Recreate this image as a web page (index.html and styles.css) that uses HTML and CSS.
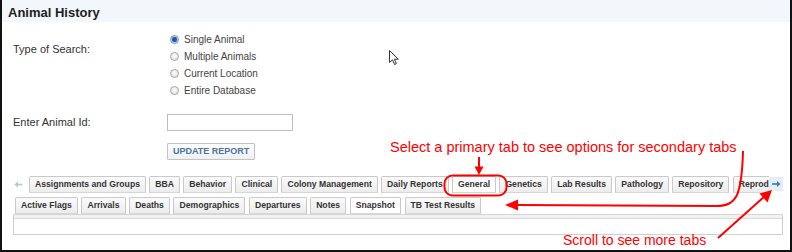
FILE: index.html
```html
<!DOCTYPE html>
<html>
<head>
<meta charset="utf-8">
<link rel="stylesheet" href="styles.css">
</head>
<body>
<div class="frame">
  <div class="header">Animal History</div>
  <div class="form">
    <div class="row search">
      <div class="label">Type of Search:</div>
      <div class="radios">
        <div class="radio"><span class="dot on"></span>Single Animal</div>
        <div class="radio"><span class="dot"></span>Multiple Animals</div>
        <div class="radio"><span class="dot"></span>Current Location</div>
        <div class="radio"><span class="dot"></span>Entire Database</div>
      </div>
    </div>
    <div class="row idrow">
      <div class="label">Enter Animal Id:</div>
      <input class="idinput" type="text">
    </div>
    <div class="row btnrow">
      <div class="label"></div>
      <button class="btn">UPDATE REPORT</button>
    </div>
  </div>
  <div class="tabs">
    <div class="strip primary">
      <div class="scroll left">
        <svg width="14" height="17" viewBox="0 0 14 17"><path d="M3.5 8.5H9.5" stroke="#b9c4cf" stroke-width="1.6"/><path d="M1.5 8.5L5 5.5V11.5Z" fill="#b9c4cf"/></svg>
      </div>
      <div class="tablist">
        <div class="tab">Assignments and Groups</div>
        <div class="tab">BBA</div>
        <div class="tab">Behavior</div>
        <div class="tab">Clinical</div>
        <div class="tab">Colony Management</div>
        <div class="tab">Daily Reports</div>
        <div class="tab active">General</div>
        <div class="tab">Genetics</div>
        <div class="tab">Lab Results</div>
        <div class="tab">Pathology</div>
        <div class="tab">Repository</div>
        <div class="tab">Reproductive</div>
      </div>
      <div class="scroll right">
        <svg width="14" height="14" viewBox="0 0 14 14"><path d="M3 7H9" stroke="#3b78c0" stroke-width="1.6"/><path d="M11.5 7L8 4V10Z" fill="#3b78c0"/></svg>
      </div>
    </div>
    <div class="strip secondary">
      <div class="tab">Active Flags</div>
      <div class="tab">Arrivals</div>
      <div class="tab">Deaths</div>
      <div class="tab">Demographics</div>
      <div class="tab">Departures</div>
      <div class="tab">Notes</div>
      <div class="tab active">Snapshot</div>
      <div class="tab">TB Test Results</div>
    </div>
    <div class="panel"></div>
  </div>

  <div class="note note1">Select a primary tab to see options for secondary tabs</div>
  <div class="note note2">Scroll to see more tabs</div>

  <svg class="overlay" width="792" height="252" viewBox="0 0 792 252">
    <rect x="444.5" y="175.5" width="62" height="20" rx="8" fill="none" stroke="#f00" stroke-width="2"/>
    <path d="M479 157V168" stroke="#f00" stroke-width="2"/>
    <path d="M474.5 166.5H483.5L479 175Z" fill="#f00"/>
    <path d="M743 151C742.5 170 740 188 737 195C733 203 727 206 716 206L516 205" fill="none" stroke="#f00" stroke-width="2"/>
    <path d="M505 205L518 199.5V210.5Z" fill="#f00"/>
    <path d="M718 238L765 196" stroke="#f00" stroke-width="2"/>
    <path d="M772 190L767.5 202.5L759.5 193.5Z" fill="#f00"/>
  </svg>

  <svg class="cursor" width="12" height="16" viewBox="0 0 12 16">
    <path d="M0.5 0.5V12.5L3.5 9.8L5.6 14.5L7.4 13.7L5.4 9.2H9.3Z" fill="#fff" stroke="#333" stroke-width="1" stroke-linejoin="round"/>
  </svg>
</div>
</body>
</html>
```
FILE: styles.css
```css
html, body {
  margin: 0;
  padding: 0;
  background: #fff;
}

.frame {
  position: relative;
  width: 792px;
  height: 252px;
  box-sizing: border-box;
  border: 2px solid #111;
  border-top: 0;
  overflow: hidden;
  font-family: "Liberation Sans", Arial, sans-serif;
  color: #333;
  background: #fff;
}

.header {
  height: 20px;
  padding-top: 2px;
  padding-left: 6px;
  line-height: 21px;
  font-size: 13px;
  font-weight: bold;
  color: #1e1e1e;
  background: #f2f7fb;
}

.form {
  padding-left: 11px;
}

.row {
  display: flex;
}

.label {
  width: 154px;
  flex-shrink: 0;
  font-size: 11px;
  line-height: 17px;
  color: #333;
}

.search {
  margin-top: 8px;
}

.search .label {
  padding-top: 11px;
}

.radios {
  display: flex;
  flex-direction: column;
  padding-top: 1px;
}

.radio {
  display: flex;
  align-items: center;
  height: 17px;
  padding-left: 3px;
  font-size: 10px;
  color: #444;
}

.dot {
  width: 9px;
  height: 9px;
  box-sizing: border-box;
  border-radius: 50%;
  border: 1px solid #a3a3a3;
  background: radial-gradient(circle at 50% 40%, #ffffff, #dcdcdc);
  margin-right: 5px;
}

.dot.on {
  border-color: #7b8fa6;
  background: radial-gradient(circle, #1d5aa6 0 2px, #5d93cf 2.6px, #dfe8f2 3.2px);
}

.idrow {
  margin-top: 15px;
  align-items: center;
}

.idinput {
  width: 126px;
  height: 17px;
  box-sizing: border-box;
  border: 1px solid #bdbdbd;
  padding: 0;
  margin: 0;
}

.btnrow {
  margin-top: 12px;
}

.btn {
  height: 17px;
  box-sizing: border-box;
  margin: 0;
  padding: 0 5px;
  border: 1px solid #c4c4c4;
  border-radius: 1px;
  background: linear-gradient(#ffffff, #eef0f2);
  font-family: "Liberation Sans", Arial, sans-serif;
  font-size: 9px;
  font-weight: bold;
  color: #4a74a0;
  line-height: 15px;
}

.tabs {
  margin-top: 16px;
  padding-left: 11px;
  width: 770px;
}

.strip {
  display: flex;
  gap: 3.6px;
}

.primary {
  height: 17px;
  gap: 0;
}

.scroll {
  flex-shrink: 0;
  display: flex;
  align-items: center;
}

.scroll.left {
  width: 14px;
  margin-right: 2px;
}

.scroll.right {
  width: 14px;
  height: 14px;
  margin-top: 1px;
  background: #e6edf4;
}

.tablist {
  flex: 1;
  display: flex;
  gap: 3.3px;
  overflow: hidden;
}

.tab {
  flex-shrink: 0;
  height: 17px;
  box-sizing: border-box;
  padding: 0 5px;
  border: 1px solid #c9c9c9;
  border-bottom-color: #d6d6d6;
  border-radius: 2px 2px 0 0;
  background: linear-gradient(#fbfbfb, #ececec);
  font-size: 8.65px;
  font-weight: bold;
  line-height: 15px;
  color: #333;
  white-space: nowrap;
}

.tab.active {
  background: #fff;
}

.secondary {
  margin-top: 4px;
  padding-left: 2px;
}

.panel {
  height: 21px;
  box-sizing: border-box;
  border: 1px solid #cfcfcf;
  border-top-color: #d6d6d6;
  background: linear-gradient(#f1f1f1 0 3px, #d9d9d9 3px 4px, #fff 4px);
}

.note {
  position: absolute;
  color: #f00;
  line-height: 15px;
  white-space: nowrap;
}

.note1 {
  left: 388px;
  top: 140px;
  font-size: 14.5px;
}

.note2 {
  left: 561px;
  top: 233px;
  font-size: 14px;
}

.overlay {
  position: absolute;
  left: -2px;
  top: 0;
}

.cursor {
  position: absolute;
  left: 387px;
  top: 50px;
}
```
